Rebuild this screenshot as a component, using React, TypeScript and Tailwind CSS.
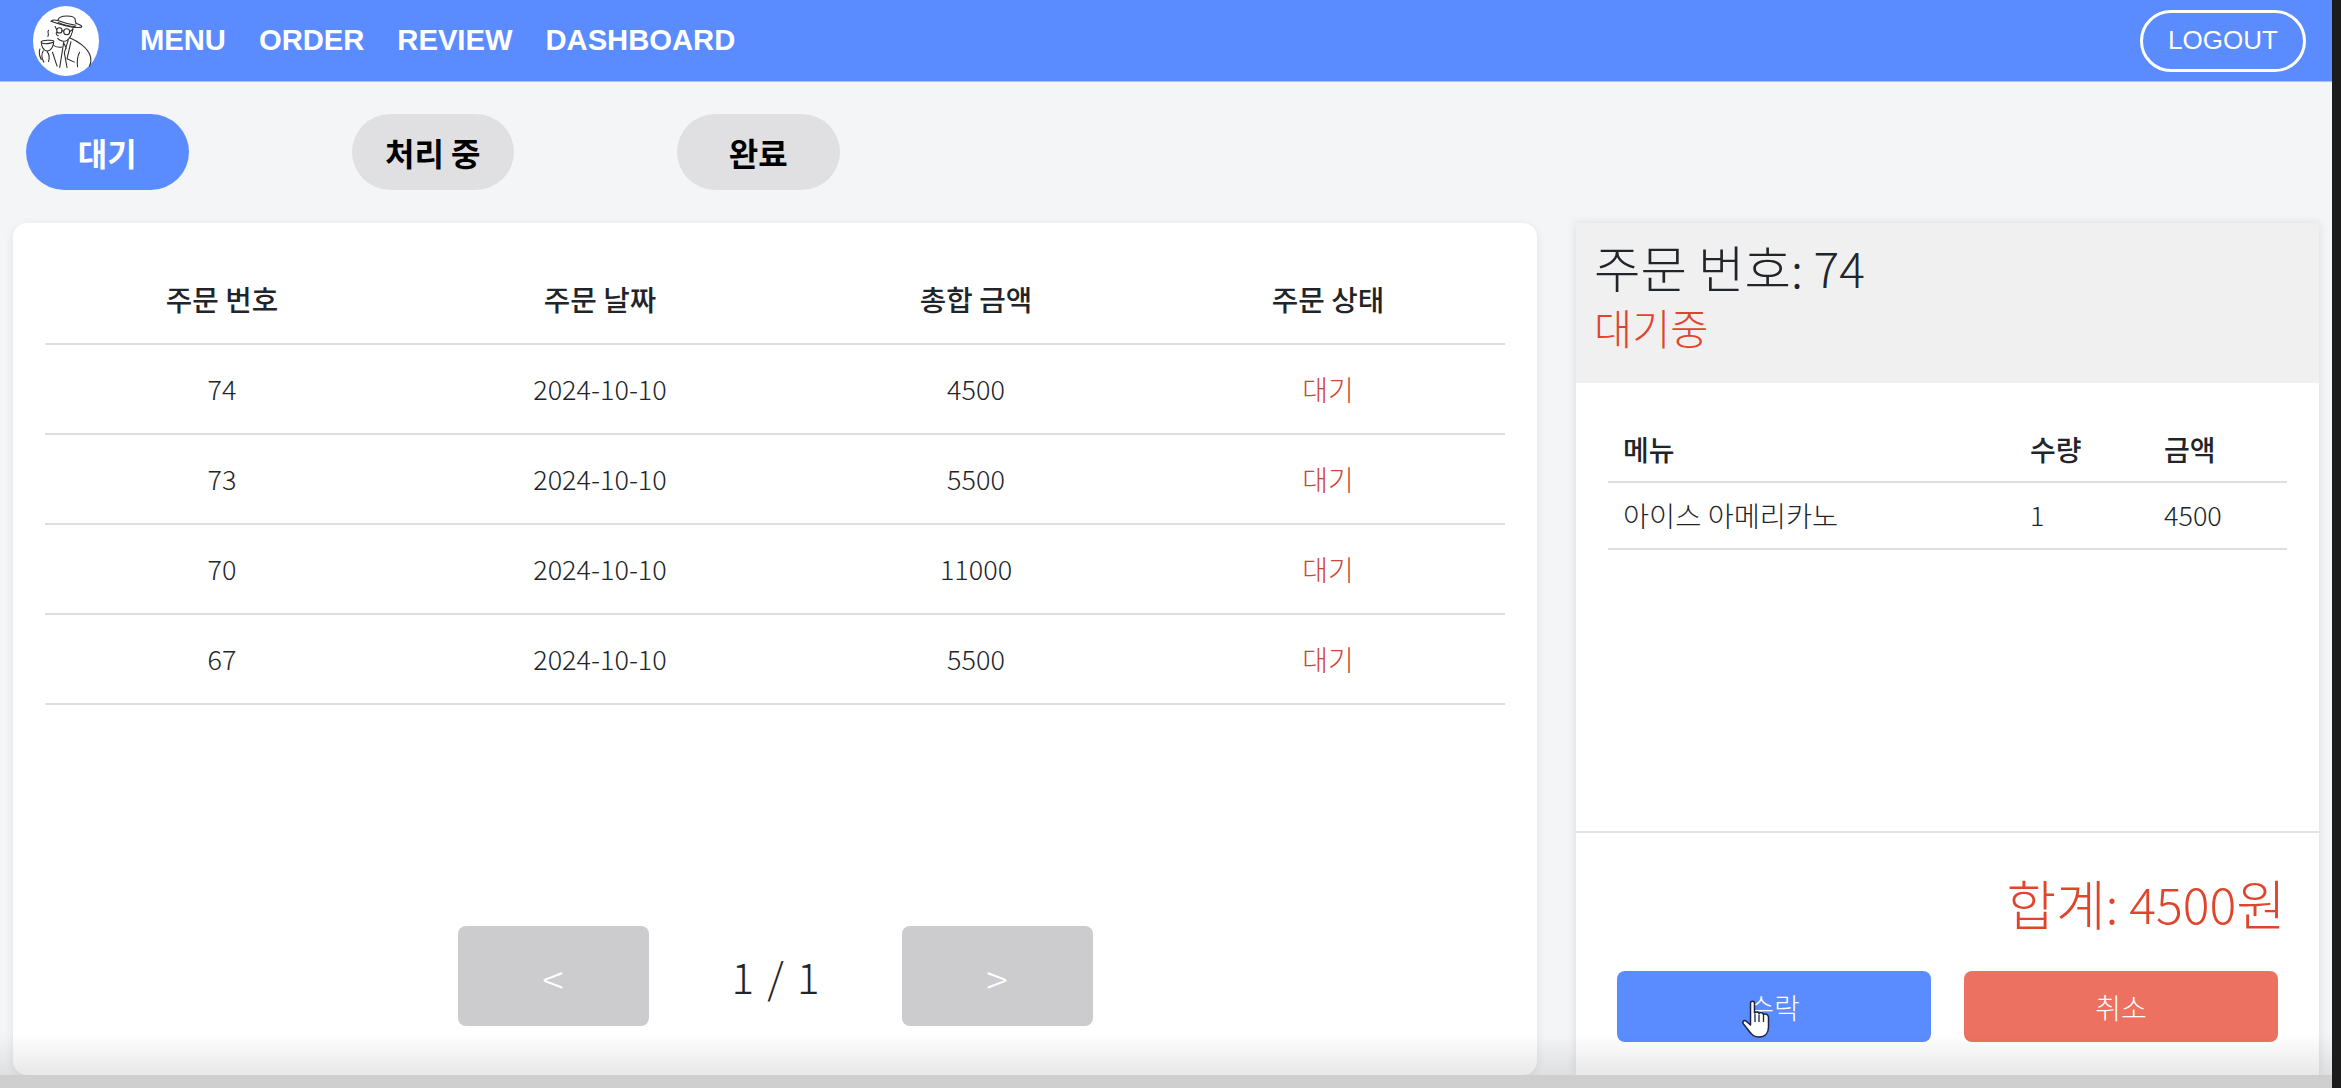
import React from "react";

type Order = {
  id: number;
  date: string;
  total: number;
};

const orders: Order[] = [
  { id: 74, date: "2024-10-10", total: 4500 },
  { id: 73, date: "2024-10-10", total: 5500 },
  { id: 70, date: "2024-10-10", total: 11000 },
  { id: 67, date: "2024-10-10", total: 5500 },
];

const navItems = ["MENU", "ORDER", "REVIEW", "DASHBOARD"];
const tabs = ["대기", "처리 중", "완료"];
const columns = ["주문 번호", "주문 날짜", "총합 금액", "주문 상태"];

const Logo = () => (
  <svg viewBox="25 10 200 212" className="w-[70px] h-[70px] shrink-0">
    <ellipse cx="125" cy="116" rx="100" ry="106" fill="#fff" />
    <g fill="none" stroke="#2a2a2a" strokeWidth="3.2" strokeLinecap="round" strokeLinejoin="round">
      {/* hat */}
      <path d="M80 56 C95 62 150 80 172 74 C176 70 165 66 155 62" />
      <path d="M80 56 C84 50 92 52 100 54 C102 44 112 40 128 40 C142 40 150 44 152 48 L155 62" />
      <path d="M100 54 C115 60 140 66 155 68" />
      <path d="M101 60 C115 66 140 72 153 72" />
      {/* face + glasses */}
      <circle cx="105" cy="84" r="8" />
      <circle cx="127" cy="88" r="9" />
      <path d="M113 85 L118 86 M136 88 L146 80 M97 82 L92 72" />
      <path d="M96 90 C94 96 98 100 102 100 M100 108 C106 116 120 120 128 114 C136 108 144 96 146 78" />
      {/* steam + cup */}
      <path d="M72 84 C66 90 76 94 70 102" />
      <path d="M50 118 C54 114 84 112 88 116 C88 130 80 146 68 146 C56 146 50 130 50 118 Z" />
      <path d="M52 122 C60 126 78 124 86 120" />
      <path d="M56 146 C50 156 52 170 58 180 M68 148 C74 156 76 166 72 178 M46 140 C42 150 46 164 50 172" />
      {/* coat */}
      <path d="M118 120 L106 196 M132 112 L120 152 L128 196 M118 122 L126 138" />
      <path d="M136 106 C160 116 190 136 198 160 C202 172 200 184 196 192" />
      <path d="M140 118 L128 170 L150 180 M166 150 C160 162 158 178 160 194 M88 130 C96 134 104 136 112 134" />
      <path d="M84 150 C90 166 94 182 98 192" />
    </g>
  </svg>
);

const HandCursor = () => (
  <svg viewBox="0 0 28 38" className="absolute left-[125px] top-[29px] w-[28px] h-[38px]">
    <path
      d="M8.5 3 C8.5 0.5 12.5 0.5 12.5 3 V13 C14 11.5 16.5 11.5 17 13.5 C18.5 12 21 12.5 21.5 14.5 C23 13.5 26 14 26.5 17 V27 C26.5 33 23 37 17 37 C12 37 10 35 7 31 L1.5 24 C0 22 1.5 19.5 4 21 L8.5 25 Z"
      fill="#fff"
      stroke="#1b2340"
      strokeWidth="1.5"
      strokeLinejoin="round"
    />
    <path d="M13 14 V22 M17 14.5 V22 M21.5 15 V22" stroke="#1b2340" strokeWidth="1.3" fill="none" />
  </svg>
);

const App = () => {
  return (
    <div className="flex w-[2341px] h-[1088px] overflow-hidden bg-[#1c1c1c] font-['Noto_Sans_CJK_KR',sans-serif] text-[#212529]">
      <div className="relative flex flex-col w-[2332px] h-full bg-[#f4f5f7]">
        {/* HEADER */}
        <header className="flex items-center h-[82px] pl-[31px] pr-[26px] bg-[#5b8cff] border-b border-[#a9c3ff] font-['Liberation_Sans',sans-serif] text-white">
          <Logo />
          <nav className="flex gap-[33px] ml-[39px] text-[29.2px] font-bold">
            {navItems.map((item) => (
              <span key={item}>{item}</span>
            ))}
          </nav>
          <button className="ml-auto w-[166px] h-[62px] rounded-[31px] border-[3px] border-white text-[26px]">
            LOGOUT
          </button>
        </header>

        {/* TABS */}
        <div className="flex gap-[163px] pl-[26px] pt-[32px] pb-[33px]">
          {tabs.map((tab, i) => (
            <button
              key={tab}
              className={`w-[162.5px] h-[76px] rounded-[38px] text-[32px] font-bold ${
                i === 0 ? "bg-[#5b8cff] text-white" : "bg-[#e0e0e2] text-black"
              }`}
            >
              {tab}
            </button>
          ))}
        </div>

        <div className="flex gap-[39px] pl-[13px] h-[852px]">
          {/* ORDER LIST */}
          <section className="flex flex-col w-[1524px] h-full px-[32px] pt-[32px] pb-[49px] bg-white rounded-[14px] shadow-[0_2px_10px_rgba(0,0,0,0.08)]">
            <div className="grid grid-cols-[354px_402px_350px_354px] h-[90px] items-center text-center border-b-2 border-[#dedede] text-[28.8px] font-medium">
              {columns.map((col) => (
                <div key={col}>{col}</div>
              ))}
            </div>
            {orders.map((order) => (
              <div
                key={order.id}
                className="grid grid-cols-[354px_402px_350px_354px] h-[90px] items-center text-center border-b-2 border-[#dedede] text-[27px] font-light"
              >
                <div>{order.id}</div>
                <div>{order.date}</div>
                <div>{order.total}</div>
                <div className="text-[28px] text-[#d04434]">대기</div>
              </div>
            ))}
            <div className="flex items-center justify-center gap-[83px] mt-auto">
              <button className="w-[191px] h-[100px] pt-1 rounded-[8px] bg-[#cccbce] text-white text-[40px] font-light">
                &lt;
              </button>
              <span className="w-[87px] -mt-[2px] text-center text-[42px] font-light whitespace-nowrap [word-spacing:4px]">
                1 / 1
              </span>
              <button className="w-[191px] h-[100px] pt-1 rounded-[8px] bg-[#cccbce] text-white text-[40px] font-light">
                &gt;
              </button>
            </div>
          </section>

          {/* ORDER DETAIL */}
          <aside className="flex flex-col w-[743px] h-full bg-white shadow-[0_0_10px_rgba(0,0,0,0.1)]">
            <div className="flex flex-col h-[160px] pl-[18px] pt-[10px] bg-[#f0f0f1] font-light">
              <div className="h-[66px] leading-[66px]">
                <span className="text-[50.5px]">주문 번호</span>
                <span className="text-[48px]">: 74</span>
              </div>
              <div className="text-[41.5px] leading-[56px] text-[#e0452b]">대기중</div>
            </div>

            <div className="flex-1 px-[32px] pt-[34px]">
              <div className="grid grid-cols-[407px_134px_136px] h-[66px] items-center px-[15px] border-b-2 border-[#dedede] text-[28px] font-medium">
                <div>메뉴</div>
                <div>수량</div>
                <div>금액</div>
              </div>
              <div className="grid grid-cols-[407px_134px_136px] h-[67px] items-center px-[15px] border-b-2 border-[#dedede] text-[27px] font-light">
                <div className="text-[28.4px]">아이스 아메리카노</div>
                <div>1</div>
                <div>4500</div>
              </div>
            </div>

            <div className="h-[244px] px-[41px] border-t-2 border-[#e4e4e4]">
              <div className="flex items-center justify-end h-[138px] -mr-[8px] text-[#e0452b] font-light">
                <span className="text-[54px]">합계</span>
                <span className="text-[50px] whitespace-pre">: 4500</span>
                <span className="text-[54px]">원</span>
              </div>
              <div className="flex gap-[33px]">
                <button className="relative w-[314px] h-[71px] rounded-[8px] bg-[#5b8cff] text-white text-[28px] font-light">
                  수락
                  <HandCursor />
                </button>
                <button className="w-[314px] h-[71px] rounded-[8px] bg-[#ed7160] text-white text-[28px] font-light">
                  취소
                </button>
              </div>
            </div>
          </aside>
        </div>

        <div className="flex-1 bg-[#cfcfcf]" />
        {/* bottom fade over the page */}
        <div className="absolute left-0 right-0 bottom-[13px] h-[42px] pointer-events-none bg-gradient-to-b from-transparent to-[rgba(0,0,0,0.09)]" />
      </div>
    </div>
  );
};

export default App;
